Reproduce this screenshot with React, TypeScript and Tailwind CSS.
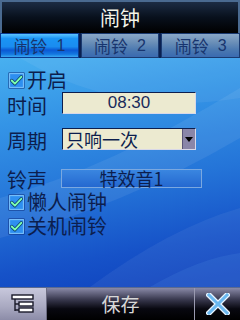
const font = "font-['Noto_Sans_CJK_SC','Noto_Sans',sans-serif]";

function Check() {
  return (
    <svg width="17" height="17" viewBox="0 0 16 16" className="shrink-0">
      <rect x="0.5" y="0.5" width="15" height="15" fill="#0b2a78" />
      <rect x="1.5" y="1.5" width="13" height="13" fill="#2e8ff0" stroke="#7cc4ff" strokeWidth="1" />
      <path d="M3.5 8 L6.5 11 L12.5 4.5" fill="none" stroke="#0b3a6a" strokeWidth="3.2" strokeLinecap="round" strokeLinejoin="round" />
      <path d="M3.5 8 L6.5 11 L12.5 4.5" fill="none" stroke="#7dffb0" strokeWidth="1.8" strokeLinecap="round" strokeLinejoin="round" />
    </svg>
  );
}

function Tab({ label, num, active }: { label: string; num: string; active?: boolean }) {
  return (
    <div
      className={
        active
          ? "flex-1 flex items-center justify-center gap-[9px] border border-[#0a3a90] bg-[linear-gradient(180deg,#5cc4ff_0%,#1a94f4_20%,#1a8cf0_55%,#0a58d4_70%,#1478e0_88%,#3aa8f4_100%)]"
          : "flex-1 flex items-center justify-center gap-[9px] border border-[#1a3a70] bg-[linear-gradient(180deg,#8aa8c8_0%,#6c90b8_35%,#4a78b0_70%,#3a6ab0_100%)]"
      }
    >
      <span className="block text-[17px] leading-[18px] text-[#18356e]">{label}</span>
      <span className="block text-[16px] leading-[18px] text-[#18356e] font-['Liberation_Sans',sans-serif]">{num}</span>
    </div>
  );
}

export default function App() {
  return (
    <div className={`w-[240px] h-[320px] flex flex-col overflow-hidden ${font}`}>
      <div className="h-[33px] flex items-center justify-center border-t-2 border-x-2 border-[#4a6a90] bg-[linear-gradient(180deg,#1c2c44_0%,#08101c_50%,#000000_100%)]">
        <span className="block text-[20px] leading-[22px] text-[#f4f4e8]">闹钟</span>
      </div>

      <div className="h-[25px] flex gap-[2px] bg-[#0a2050]">
        <Tab label="闹铃" num="1" active />
        <Tab label="闹铃" num="2" />
        <Tab label="闹铃" num="3" />
      </div>

      <div className="relative flex-1 overflow-hidden bg-[linear-gradient(170deg,#48b0f0_0%,#3494e6_25%,#2474d8_55%,#1652c8_80%,#0e40bc_100%)]">
        <svg className="absolute inset-0" width="240" height="229" viewBox="0 0 240 229">
          <path d="M20 0 Q120 60 240 40 L240 0 Z" fill="#ffffff" opacity="0.06" />
          <path d="M0 140 Q110 110 240 30 L240 80 Q120 150 0 180 Z" fill="#ffffff" opacity="0.07" />
          <path d="M90 229 Q170 170 240 150 L240 229 Z" fill="#ffffff" opacity="0.06" />
          <path d="M150 229 Q200 200 240 195 L240 229 Z" fill="#80c0ff" opacity="0.1" />
        </svg>

        <div className="relative flex flex-col text-[#0c1e4e] text-[20px] leading-[20px]">
          <div className="mt-[11px] h-[22px] flex items-center pl-[8px] gap-[2px]">
            <Check />
            <span className="block">开启</span>
          </div>

          <div className="mt-[1px] h-[22px] flex items-center pl-[7px]">
            <span className="block w-[55px] pt-[5px]">时间</span>
            <div className="w-[134px] h-[22px] flex items-center justify-center bg-[#ecead0] border-t border-l border-[#0c1e4e] border-r border-b border-r-[#d8d8e8] border-b-[#d8d8e8]">
              <span className="block text-[17px] leading-[18px] text-[#1a2a5a] font-['Liberation_Sans',sans-serif]">08:30</span>
            </div>
          </div>

          <div className="mt-[14px] h-[22px] flex items-center pl-[7px]">
            <span className="block w-[55px] pt-[4px]">周期</span>
            <div className="w-[134px] h-[22px] flex bg-[#ecead0] border-t border-l border-[#0c1e4e] border-r border-b border-r-[#d8d8e8] border-b-[#d8d8e8]">
              <div className="flex-1 flex items-center pl-[3px]">
                <span className="block text-[18px] leading-[19px] text-[#0c1e4e]">只响一次</span>
              </div>
              <div className="w-[13px] flex items-center justify-center bg-[#8a86a8] border-l border-[#5a5678]">
                <svg width="8" height="5" viewBox="0 0 8 5">
                  <path d="M0 0 L8 0 L4 5 Z" fill="#000000" />
                </svg>
              </div>
            </div>
          </div>

          <div className="mt-[18px] h-[20px] flex items-center pl-[7px]">
            <span className="block w-[54px] pt-[4px]">铃声</span>
            <div className="w-[141px] h-[19px] flex items-center justify-center border border-[#7aa8e0] bg-[linear-gradient(180deg,#3a86e0_0%,#2468d0_100%)]">
              <span className="block text-[18px] leading-[18px] text-[#0c1e4e]">特效音1</span>
            </div>
          </div>

          <div className="mt-[3px] h-[22px] flex items-center pl-[8px] gap-[2px]">
            <Check />
            <span className="block">懒人闹钟</span>
          </div>

          <div className="mt-[2px] h-[22px] flex items-center pl-[8px] gap-[2px]">
            <Check />
            <span className="block">关机闹铃</span>
          </div>
        </div>
      </div>

      <div className="h-[33px] flex border-t border-[#5a6a90]">
        <div className="w-[47px] flex items-center justify-center bg-[linear-gradient(180deg,#c8c8dc_0%,#a8a8c0_60%,#8c8ca8_100%)] border-r border-[#6a6a80]">
          <svg width="24" height="20" viewBox="0 0 24 20">
            <rect x="1" y="1" width="21" height="4" fill="#ffffff" stroke="#1a1a2a" strokeWidth="1.4" />
            <path d="M4 5 L4 17 M4 10 L8 10 M4 16 L8 16" stroke="#1a1a2a" strokeWidth="1.4" fill="none" />
            <rect x="8" y="8" width="14" height="4" fill="#ffffff" stroke="#1a1a2a" strokeWidth="1.4" />
            <rect x="8" y="14" width="14" height="4" fill="#ffffff" stroke="#1a1a2a" strokeWidth="1.4" />
          </svg>
        </div>
        <div className="flex-1 flex items-center justify-center bg-[linear-gradient(180deg,#8a8aa8_0%,#3a3a50_35%,#080810_65%,#000000_100%)]">
          <span className="block text-[19px] leading-[20px] text-[#d8d8d8]">保存</span>
        </div>
        <div className="w-[46px] flex items-center justify-center border-l border-[#9a9ab0] bg-[linear-gradient(180deg,#8a8aa8_0%,#3a3a50_35%,#080810_65%,#000000_100%)]">
          <svg width="24" height="22" viewBox="0 0 24 22">
            <path d="M3 2 L21 20 M21 2 L3 20" stroke="#e8f4ff" strokeWidth="5.5" strokeLinecap="square" />
            <path d="M3 2 L21 20 M21 2 L3 20" stroke="#6ab8f0" strokeWidth="3" strokeLinecap="square" />
          </svg>
        </div>
      </div>
    </div>
  );
}
